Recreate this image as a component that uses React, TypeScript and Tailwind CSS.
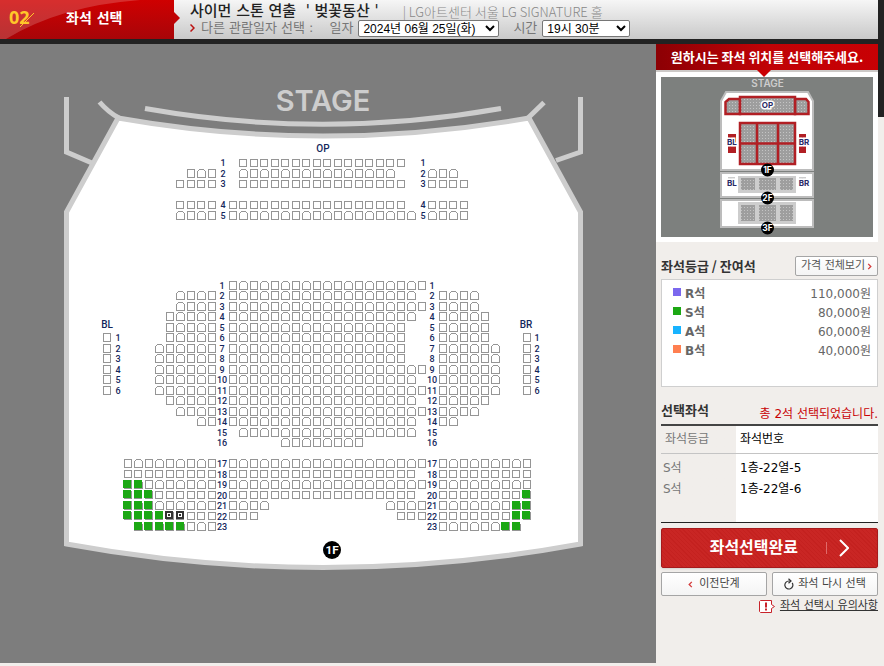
const grades = [
  { name: "R석", price: "110,000원", color: "bg-[#7b68ee]" },
  { name: "S석", price: "80,000원", color: "bg-[#1ca814]" },
  { name: "A석", price: "60,000원", color: "bg-[#17b3ff]" },
  { name: "B석", price: "40,000원", color: "bg-[#ff7f50]" },
];

const picked = [
  { grade: "S석", seat: "1층-22열-5" },
  { grade: "S석", seat: "1층-22열-6" },
];

// column ranges per row: [from, to]
const opRows = [
  { line: 0, seats: [[11, 26]] },
  { line: 1, seats: [[6, 8], [11, 25], [29, 31]] },
  { line: 2, seats: [[5, 8], [11, 26], [29, 32]] },
  { line: 4, seats: [[5, 8], [10, 26], [29, 32]] },
  { line: 5, seats: [[5, 8], [10, 27], [29, 32]] },
];

const hallRows = [
  { line: 0, seats: [[10, 28]] },
  { line: 1, seats: [[5, 8], [10, 27], [30, 33]] },
  { line: 2, seats: [[5, 8], [10, 28], [30, 33]] },
  { line: 3, seats: [[4, 8], [10, 27], [30, 34]] },
  { line: 4, seats: [[4, 8], [10, 26], [30, 34]] },
  { line: 5, seats: [[4, 8], [10, 26], [30, 34]] },
  { line: 6, seats: [[3, 8], [10, 26], [30, 35]] },
  { line: 7, seats: [[3, 8], [10, 26], [30, 35]] },
  { line: 8, seats: [[3, 8], [10, 28], [30, 35]] },
  { line: 9, seats: [[3, 8], [10, 27], [30, 35]] },
  { line: 10, seats: [[3, 8], [10, 28], [30, 35]] },
  { line: 11, seats: [[4, 8], [10, 27], [30, 34]] },
  { line: 12, seats: [[5, 8], [10, 28], [30, 33]] },
  { line: 13, seats: [[7, 8], [10, 27], [30, 31]] },
  { line: 14, seats: [[11, 27]] },
  { line: 15, seats: [[15, 22]] },
  { line: 17, seats: [[0, 8], [10, 28], [30, 38]] },
  { line: 18, seats: [[0, 8], [10, 27], [30, 38]] },
  { line: 19, seats: [[0, 8], [10, 28], [30, 38]], open: [0, 1] },
  { line: 20, seats: [[0, 8], [10, 27], [30, 38]], open: [0, 1, 2, 38] },
  { line: 21, seats: [[0, 8], [10, 13], [25, 28], [30, 38]], open: [0, 1, 2, 37, 38] },
  { line: 22, seats: [[0, 8], [10, 12], [26, 28], [30, 38]], open: [0, 1, 2, 3, 37, 38], chosen: [4, 5] },
  { line: 23, seats: [[1, 8], [30, 37]], open: [1, 2, 3, 4, 5, 36, 37] },
];

const range = ([from, to]: number[]) =>
  Array.from({ length: to - from + 1 }, (_, i) => from + i);

type SeatProps = { col: number; top: number; line: number; state?: string };

function Seat({ col, top, line, state }: SeatProps) {
  const x = Math.floor(124.4 + col * 10.5);
  const y = Math.floor(top + line * 10.5);
  const tall = line % 2 !== 0 || (top === 281 && line < 16);
  const round = col % 2 !== 0 && tall;
  const mx = col % 2 === 0 ? x - 1 : x;
  const my = line % 2 === 0 ? y - 1 : y;
  return (
    <g>
      {round ? (
        <path
          d={`M${x + 0.5} ${y + 8.5}V${y + 2.5}L${x + 2.5} ${y + 0.5}H${x + 6.5}L${x + 8.5} ${y + 2.5}V${y + 8.5}Z`}
          fill="#fff"
          stroke="#959595"
        />
      ) : (
        <rect x={x + 0.5} y={y + 0.5} width="7" height={tall ? 8 : 7} fill="#fff" stroke="#959595" />
      )}
      {state === "open" && <rect x={mx} y={my} width="8" height="8" fill="#1ca814" />}
      {state === "chosen" && (
        <>
          <rect x={mx} y={my} width="8" height="8" fill="#333" />
          <rect x={mx + 2.5} y={my + 2.5} width="3" height="3" fill="#333" stroke="#fff" />
        </>
      )}
    </g>
  );
}

function RowNo({ x, y, n, size = 9 }: { x: number; y: number; n: number | string; size?: number }) {
  return (
    <text x={x} y={y} textAnchor="middle" fontSize={size} fontWeight="500" fill="#14275c">
      {n}
    </text>
  );
}

function Floor({ x, y, r, label }: { x: number; y: number; r: number; label: string }) {
  return (
    <g>
      <circle cx={x} cy={y} r={r} fill="#000" />
      <text x={x} y={y + r * 0.46} textAnchor="middle" fontSize={r * 1.3} fontWeight="700" fill="#fff">
        {label}
      </text>
    </g>
  );
}

function SeatMap() {
  return (
    <svg viewBox="0 44 656 619" className="block w-full font-['Roboto',sans-serif]" role="img" aria-label="1층 좌석 배치도">
      <g fill="none" stroke="#cdcdcd" strokeWidth="5">
        <path
          d="M118 118Q220 136 323 136T529 118L580.500 212V544Q452 567.500 323 567.500T66.500 544V212Z"
          fill="#fff"
        />
        <path d="M66.500 97V152L92 163M580.500 97V152L556 160.500" />
        <path d="M99.500 102Q108 112 119 118M544 102.500L528 118" />
        <path d="M145 108.500Q323 140 501 108.500" />
      </g>
      <text x="323" y="111" textAnchor="middle" fontSize="29" fontWeight="600" fill="#cdcdcd" className="font-['Inter',sans-serif]">
        STAGE
      </text>
      <RowNo x={323} y={152} n="OP" size={10} />
      <RowNo x={107} y={328} n="BL" size={10} />
      <RowNo x={526} y={328} n="BR" size={10} />

      <g shapeRendering="crispEdges">
        {opRows.map((row) =>
          row.seats.flatMap(range).map((col) => (
            <Seat key={`${row.line}-${col}`} col={col} top={159} line={row.line} />
          ))
        )}
        {hallRows.map((row) =>
          row.seats.flatMap(range).map((col) => (
            <Seat
              key={`${row.line}-${col}`}
              col={col}
              top={281}
              line={row.line}
              state={row.open?.includes(col) ? "open" : row.chosen?.includes(col) ? "chosen" : ""}
            />
          ))
        )}
        {range([5, 10]).map((line) => (
          <g key={line}>
            <Seat col={-2} top={281} line={line} />
            <Seat col={38} top={281} line={line} />
          </g>
        ))}
      </g>

      {opRows.map((row, i) => (
        <g key={i}>
          <RowNo x={223} y={166 + row.line * 10.5} n={i + 1} />
          <RowNo x={423} y={166 + row.line * 10.5} n={i + 1} />
        </g>
      ))}
      {hallRows.map((row, i) => (
        <g key={i}>
          <RowNo x={222} y={288.5 + row.line * 10.5} n={i + 1} />
          <RowNo x={432} y={288.5 + row.line * 10.5} n={i + 1} />
        </g>
      ))}
      {range([1, 6]).map((n) => (
        <g key={n}>
          <RowNo x={118} y={330.5 + n * 10.5} n={n} />
          <RowNo x={537} y={330.5 + n * 10.5} n={n} />
        </g>
      ))}
      <Floor x={332} y={550} r={9} label="1F" />
    </svg>
  );
}

function MiniLabel({ x, y, label }: { x: number; y: number; label: string }) {
  return (
    <text x={x} y={y} textAnchor="middle" fontSize="8" fontWeight="700" fill="#2a2a66" stroke="#fff" strokeWidth="3" paintOrder="stroke">
      {label}
    </text>
  );
}

function MiniMap() {
  return (
    <svg viewBox="661 77 212 160" className="block w-full bg-[#7d807e] font-['Inter',sans-serif]" role="img" aria-label="전체 좌석 위치">
      <defs>
        <pattern id="dots" width="3" height="3" patternUnits="userSpaceOnUse">
          <rect width="3" height="3" fill="#9e9e9e" />
          <rect width="1" height="1" fill="#c4c4c4" />
        </pattern>
      </defs>
      <text x="767.5" y="87" textAnchor="middle" fontSize="10" fontWeight="600" fill="#cdcdcd">
        STAGE
      </text>
      <g fill="#fff" stroke="#bcbcbc" strokeWidth="2">
        <path d="M721 170V101L726 92H808L813 101V170Z" />
        <path d="M721 173H813V197H721Z" />
        <path d="M721 200H813V227H721Z" />
      </g>
      <g fill="url(#dots)" stroke="#b11f24" strokeWidth="2.500">
        <path d="M725.500 114V102L729 99H740V114ZM795 114V99H806L808.500 102V114Z" />
        <path d="M740 97H795V114H740Z" />
        <path d="M740 123H795V164H740ZM757 123V164M778 123V164M740 143.500H795" />
      </g>
      <path d="M728 134H736V153H728ZM799 134H806V153H799Z" fill="#b11f24" />
      <path d="M738 176H796V193H738ZM738 202H796V224H738ZM728 177H735V179H728ZM799 177H806V179H799Z" fill="#cdcdcd" />
      <path
        d="M741 178H755V190H741ZM759 178H776V190H759ZM780 178H793V190H780ZM741 205H755V221H741ZM759 205H776V221H759ZM780 205H793V221H780Z"
        fill="url(#dots)"
      />
      <MiniLabel x={767.5} y={108} label="OP" />
      <MiniLabel x={732} y={145} label="BL" />
      <MiniLabel x={804} y={145} label="BR" />
      <MiniLabel x={732} y={186} label="BL" />
      <MiniLabel x={804} y={186} label="BR" />
      <Floor x={767.5} y={170} r={6.5} label="1F" />
      <Floor x={767.5} y={198} r={6.5} label="2F" />
      <Floor x={767.5} y={228} r={6.5} label="3F" />
    </svg>
  );
}

function Header() {
  return (
    <header className="bg-[#222] pr-[6px] pb-[5px]">
      <div className="flex h-[39px] bg-linear-to-b from-[#f6f6f6] to-[#c9c9c9]">
        <div className="relative flex w-[174px] shrink-0 items-center bg-linear-to-b from-[#cf0000] to-[#a80508]">
          <svg viewBox="0 0 180 39" className="absolute top-0 left-0 h-[39px] w-[180px]" aria-hidden="true">
            <path d="M0 0H140Q60 6 6 39H0Z" fill="#fff" opacity="0.18" />
            <path d="M174 12L180 18L174 24Z" fill="#c00306" />
            <path d="M20 27L34 13" stroke="#ffc629" strokeWidth="1" />
          </svg>
          <span className="relative w-[66px] pb-[6px] pl-[9px] font-['Open_Sans',sans-serif] text-[18px] leading-5 font-bold text-[#ffc629]">
            02
          </span>
          <h1 className="relative pb-[4px] text-[14px] leading-5 font-bold text-white">좌석 선택</h1>
        </div>

        <div className="flex flex-col whitespace-nowrap pl-4">
          <div className="flex h-5 items-center gap-6">
            <h2 className="pt-[2px] text-[15px] leading-5 font-medium whitespace-pre text-[#222]">
              사이먼 스톤 연출  ' 벚꽃동산 '
            </h2>
            <p className="pt-[4px] font-['Noto_Sans_CJK_KR',sans-serif] text-[13px] leading-5 font-light text-[#888]">
              | LG아트센터 서울 LG SIGNATURE 홀
            </p>
          </div>
          <div className="flex h-4 items-center text-[13px] leading-4 text-[#777]">
            <svg viewBox="0 0 5 8" className="mr-[6px] h-2 w-[5px]" fill="none" aria-hidden="true">
              <path d="M0.500 0.500L4 4L0.500 7.500" stroke="#b11" strokeWidth="1.500" />
            </svg>
            <span className="mr-4">다른 관람일자 선택 :</span>
            <label htmlFor="date" className="mr-[5px]">일자</label>
            <select
              id="date"
              className="mr-[14px] h-[17px] w-[141px] rounded-[2px] border border-[#767676] bg-white font-['Liberation_Sans','Noto_Sans_CJK_KR',sans-serif] text-[12px] leading-[15px] text-black"
            >
              <option>2024년 06월 25일(화)</option>
            </select>
            <label htmlFor="time" className="mr-[5px]">시간</label>
            <select
              id="time"
              className="h-[17px] w-[88px] rounded-[2px] border border-[#767676] bg-white font-['Liberation_Sans','Noto_Sans_CJK_KR',sans-serif] text-[12px] leading-[15px] text-black"
            >
              <option>19시 30분</option>
            </select>
          </div>
        </div>
      </div>
    </header>
  );
}

function Sidebar() {
  return (
    <aside className="flex w-[228px] shrink-0 items-start">
      <div className="min-w-0 flex-1">
        <div className="relative border-b-2 border-[#cdc9c7] bg-linear-to-r from-[#8c0004] via-[#c00306] to-[#c80004] text-center">
          <h2 className="font-['Noto_Sans_CJK_KR',sans-serif] text-[13px] leading-[26px] font-bold whitespace-nowrap text-white">
            원하시는 좌석 위치를 선택해주세요.
          </h2>
          <svg viewBox="0 0 14 7" className="absolute top-full left-[101px] h-[7px] w-[14px]" aria-hidden="true">
            <path d="M0 0H14L7 7Z" fill="#cb0003" />
          </svg>
        </div>
        <div className="bg-white p-[5px]">
          <MiniMap />
        </div>

        <div className="pl-[5px]">
          <div className="flex items-center justify-between pt-[14px] pb-[3px]">
            <h3 className="font-['Noto_Sans_CJK_KR',sans-serif] text-[13px] leading-5 font-bold text-[#333]">좌석등급 / 잔여석</h3>
            <button className="flex h-5 w-[83px] items-center justify-center gap-[2px] rounded-[2px] border border-[#a5a5a5] bg-linear-to-b from-white to-[#f4f4f4] text-[11px] leading-4 whitespace-nowrap text-[#555]">
              가격 전체보기
              <svg viewBox="0 0 5 8" className="h-[7px] w-[5px]" fill="none" aria-hidden="true">
                <path d="M1 1L4 4L1 7" stroke="#d43b3b" strokeWidth="1.500" />
              </svg>
            </button>
          </div>

          <div className="min-h-[108px] border border-[#cfcfcf] bg-white px-[6px] pt-[5px] pl-[11px]">
            <table className="w-full text-[12px] text-[#666]">
              <tbody>
                {grades.map((g) => (
                  <tr key={g.name} className="h-[19px] leading-[19px]">
                    <th className="text-left font-bold">
                      <span className={`mr-1 mb-[2px] inline-block size-2 ${g.color}`} />
                      {g.name}
                    </th>
                    <td className="text-right">{g.price}</td>
                  </tr>
                ))}
              </tbody>
            </table>
          </div>

          <div className="flex items-end justify-between pt-[13px]">
            <h3 className="pb-[4px] font-['Noto_Sans_CJK_KR',sans-serif] text-[13px] leading-5 font-bold text-[#333]">선택좌석</h3>
            <p className="text-[12px] leading-5 text-[#c80004]">총 2석 선택되었습니다.</p>
          </div>
          <div className="flex min-h-[99px] flex-col border-t-2 border-b border-t-[#444] border-b-[#222] bg-linear-to-r from-[#f1eeeb] from-[75px] to-white to-[75px]">
            <table className="w-full text-[12px]">
              <thead>
                <tr className="h-[27px] border-b border-[#c4c4c4]">
                  <th className="w-[75px] pl-1 text-left font-normal text-[#777]">좌석등급</th>
                  <th className="pl-1 text-left font-normal text-black">좌석번호</th>
                </tr>
              </thead>
              <tbody className="before:block before:h-1">
                {picked.map((p) => (
                  <tr key={p.seat} className="h-[21px]">
                    <td className="pl-[2px] text-[#777]">{p.grade}</td>
                    <td className="pl-1 text-black">{p.seat}</td>
                  </tr>
                ))}
              </tbody>
            </table>
          </div>

          <button className="mt-[5px] flex h-10 w-full items-center justify-end rounded-[2px] border border-[#a51a1c] bg-[repeating-linear-gradient(45deg,#c92624_0px,#c92624_2px,#c4211f_2px,#c4211f_3px)] pr-7 text-white shadow-sm">
            <span className="text-[16px] leading-5 font-bold">좌석선택완료</span>
            <span className="ml-[28px] h-3 w-px bg-[#e06a6a]" />
            <svg viewBox="0 0 10 18" className="ml-3 h-[18px] w-[10px]" fill="none" aria-hidden="true">
              <path d="M1 1L9 9L1 17" stroke="#fff" strokeWidth="2" />
            </svg>
          </button>

          <div className="mt-[4px] flex gap-[5px] text-[11px] leading-4 text-[#444]">
            <button className="flex h-6 flex-1 items-center justify-center gap-[6px] rounded-[2px] border border-[#a5a5a5] bg-linear-to-b from-white to-[#f4f4f4] whitespace-nowrap">
              <svg viewBox="0 0 5 8" className="h-[7px] w-[5px]" fill="none" aria-hidden="true">
                <path d="M4 1L1 4L4 7" stroke="#d43b3b" strokeWidth="1.500" />
              </svg>
              이전단계
            </button>
            <button className="flex h-6 flex-1 items-center justify-center gap-1 rounded-[2px] border border-[#a5a5a5] bg-linear-to-b from-white to-[#f4f4f4] whitespace-nowrap">
              <svg viewBox="0 0 10 12" className="h-3 w-[10px]" fill="none" aria-hidden="true">
                <path d="M8.200 4.800A4 4 0 1 1 5 3H7" stroke="#333" strokeWidth="1.200" />
                <path d="M4.500 0.800L7 3L4.500 5.200" stroke="#333" strokeWidth="1.200" />
              </svg>
              좌석 다시 선택
            </button>
          </div>

          <div className="mt-[1px] flex items-center justify-end gap-1">
            <svg viewBox="0 0 17 13" className="h-[13px] w-[17px]" fill="none" aria-hidden="true">
              <path d="M1.500 0.500H12.500V4.500L15.500 6.500L12.500 8.500V12.500H1.500L0.500 11.500V1.500Z" fill="#fff" stroke="#c8232a" />
              <path d="M6 2.500H8V7.500H6ZM6 8.500H8V10.500H6Z" fill="#c8232a" />
            </svg>
            <a href="#notice" className="text-[11px] leading-[18px] text-[#333] underline">
              좌석 선택시 유의사항
            </a>
          </div>
        </div>
      </div>
      <div className="h-[73px] w-[6px] bg-[#222]" />
    </aside>
  );
}

export default function App() {
  return (
    <div className="min-h-screen bg-[#f1eeeb] font-['DejaVu_Sans','Noto_Sans_CJK_KR',sans-serif]">
      <Header />
      <main className="flex items-start">
        <section className="min-w-0 flex-1 bg-[#7d7d7d]">
          <SeatMap />
        </section>
        <Sidebar />
      </main>
    </div>
  );
}
